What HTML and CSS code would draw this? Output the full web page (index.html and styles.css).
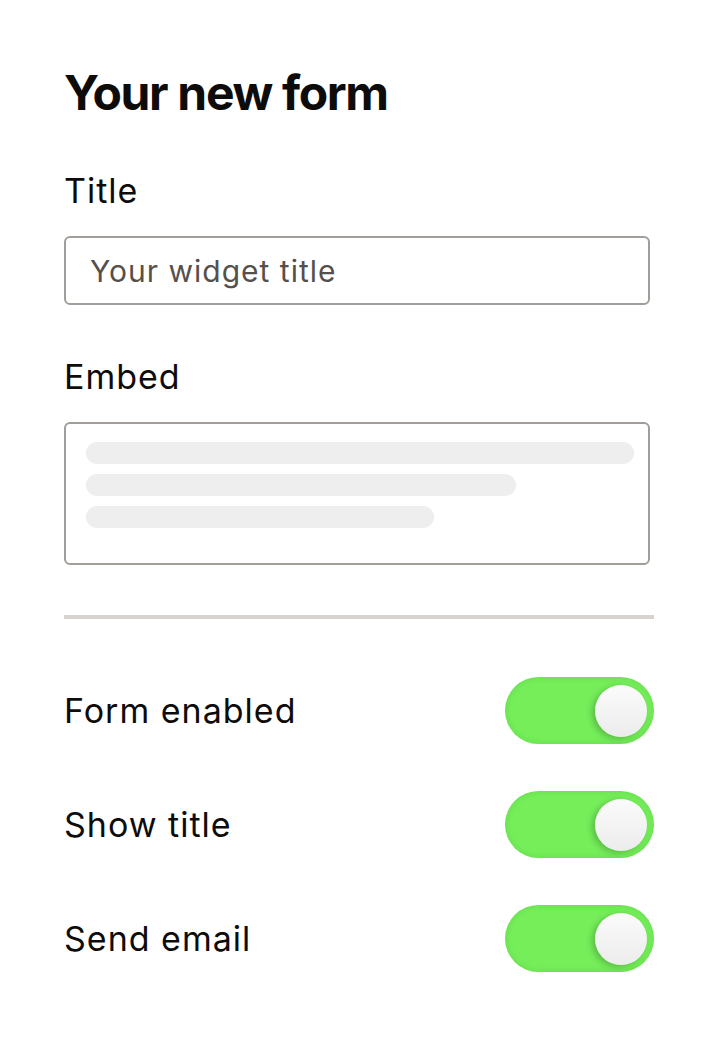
FILE: index.html
```html
<!DOCTYPE html>
<html lang="en">
<head>
<meta charset="utf-8">
<title>Your new form</title>
<link rel="stylesheet" href="styles.css">
</head>
<body>
<main class="panel">
  <h1 class="heading">Your new form</h1>
  <label class="field title-field">
    <span class="label">Title</span>
    <span class="input"><span class="placeholder">Your widget title</span></span>
  </label>
  <div class="field embed-field">
    <span class="label">Embed</span>
    <div class="embed">
      <div class="bar bar-1"></div>
      <div class="bar bar-2"></div>
      <div class="bar bar-3"></div>
    </div>
  </div>
  <hr class="divider">
  <div class="toggles">
    <div class="toggle-row">
      <span class="toggle-label">Form enabled</span>
      <span class="switch"><span class="knob"></span></span>
    </div>
    <div class="toggle-row">
      <span class="toggle-label">Show title</span>
      <span class="switch"><span class="knob"></span></span>
    </div>
    <div class="toggle-row">
      <span class="toggle-label">Send email</span>
      <span class="switch"><span class="knob"></span></span>
    </div>
  </div>
</main>
</body>
</html>
```

FILE: styles.css
```css
html, body {
  margin: 0;
  padding: 0;
  background: #ffffff;
}

body {
  font-family: Inter, "Noto Sans", sans-serif;
  color: #0d0c0b;
}

.panel {
  width: 590px;
  padding: 63px 60px 0 64px;
  display: flex;
  flex-direction: column;
}

.heading {
  margin: 0;
  font-size: 48px;
  font-weight: 700;
  letter-spacing: -0.028em;
  line-height: 60px;
}

.field {
  display: flex;
  flex-direction: column;
  width: 586px;
}

.label {
  font-size: 34px;
  font-weight: 400;
  letter-spacing: 1px;
  line-height: 40px;
  margin-bottom: 25px;
}

.title-field .label {
  margin-top: 48px;
}

.embed-field .label {
  margin-top: 52px;
}

.input {
  box-sizing: border-box;
  height: 69px;
  border: 2px solid #a19d99;
  border-radius: 6px;
  display: flex;
  align-items: center;
  padding-left: 24px;
}

.placeholder {
  font-size: 30px;
  letter-spacing: 1px;
  color: #55504c;
}

.embed {
  box-sizing: border-box;
  height: 143px;
  border: 2px solid #a19d99;
  border-radius: 6px;
  padding: 18px 14px 0 20px;
  display: flex;
  flex-direction: column;
  gap: 10px;
}

.bar {
  height: 22px;
  border-radius: 11px;
  background: #eeeeee;
}

.bar-1 { width: 548px; }
.bar-2 { width: 430px; }
.bar-3 { width: 348px; }

.divider {
  margin: 50px 0 0 0;
  width: 590px;
  height: 4px;
  border: 0;
  background: #d6d3d0;
}

.toggles {
  display: flex;
  flex-direction: column;
  gap: 47px;
  margin-top: 58px;
  width: 590px;
}

.toggle-row {
  display: flex;
  align-items: center;
  justify-content: space-between;
  height: 67px;
}

.toggle-label {
  font-size: 34px;
  letter-spacing: 1px;
  line-height: 40px;
}

.switch {
  box-sizing: border-box;
  width: 149px;
  height: 67px;
  border-radius: 34px;
  background: #75ee5a;
  display: flex;
  align-items: center;
  justify-content: flex-end;
  padding-right: 7px;
  box-shadow: inset 0 0 6px rgba(60, 160, 40, 0.25);
}

.knob {
  width: 52px;
  height: 52px;
  border-radius: 50%;
  background: linear-gradient(180deg, #fbfbfb 0%, #ececec 100%);
  box-shadow: -3px 2px 6px rgba(0, 0, 0, 0.22);
}
```
